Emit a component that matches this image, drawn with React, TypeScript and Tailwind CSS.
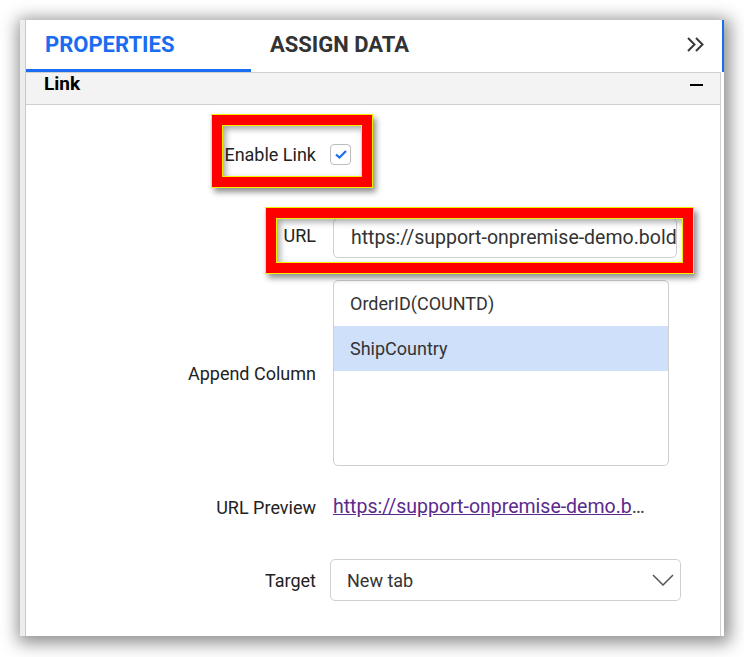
import React from "react";

function Frame({ className }: { className: string }) {
  return (
    <div className={`absolute border border-[#f0f000] shadow-[3px_4px_6px_rgba(0,0,0,0.45)] ${className}`}>
      <div className="w-full h-full border-[10px] border-[#ff0000]">
        <div className="w-full h-full border border-[#f0f000] shadow-[inset_3px_3px_6px_rgba(0,0,0,0.35)]" />
      </div>
    </div>
  );
}

export default function App() {
  return (
    <div className="w-[744px] h-[657px] bg-white pt-[20px] pl-[20px] font-[Roboto,sans-serif]">
      <div className="flex w-[704px] h-[616px] bg-white shadow-[2px_3px_16px_4px_rgba(0,0,0,0.45)]">
        <div className="w-[6px] bg-[#ededed] border-r border-[#c8c8c8]" />
        <div className="flex flex-col w-[696px]">
          <div className="flex h-[52px] items-stretch">
            <div className="w-[225px] border-b-[3px] border-[#1a6cf0] flex items-center pl-[19px] text-[22px] font-bold text-[#1a6cf0]">
              PROPERTIES
            </div>
            <div className="flex items-center pl-[19px] pb-[3px] text-[22px] font-bold text-[#333]">
              ASSIGN DATA
            </div>
            <div className="ml-auto flex items-center pr-[18px] pb-[3px]">
              <svg width="17" height="15" viewBox="0 0 17 15" fill="none" stroke="#3a3a3a" strokeWidth="2">
                <path d="M1 1 L7.5 7.5 L1 14" />
                <path d="M9 1 L15.5 7.5 L9 14" />
              </svg>
            </div>
          </div>
          <div className="flex-1 w-[695px] border-r border-[#d0d0d0] flex flex-col">
            <div className="h-[33px] bg-[#f3f3f3] border-t border-b border-[#d0d0d0] flex items-center justify-between pl-[18px] pr-[17px] pb-[8px]">
              <span className="text-[19px] font-bold text-black">Link</span>
              <span className="w-[13px] h-[2px] bg-black" />
            </div>
            <div className="relative flex-1 flex flex-col text-[18px] text-[#222]">
              <div className="flex items-center h-[21px] mt-[39px]">
                <div className="w-[290px] text-right">Enable Link</div>
                <div className="ml-[14px] w-[21px] h-[21px] rounded-[4px] border border-[#bdbdbd] bg-white flex items-center justify-center">
                  <svg width="12" height="9" viewBox="0 0 12 9" fill="none" stroke="#1a6cf0" strokeWidth="2.2">
                    <path d="M1 4.5 L4.5 7.5 L11 1" />
                  </svg>
                </div>
              </div>
              <div className="flex items-center h-[40px] mt-[53px]">
                <div className="w-[290px] text-right pb-[5px]">URL</div>
                <div className="ml-[17px] w-[344px] h-[40px] rounded-[5px] border border-[#cfcfcf] flex items-center pl-[17px] overflow-hidden whitespace-nowrap text-[19.5px] text-[#333]">
                  https://support-onpremise-demo.bold
                </div>
              </div>
              <div className="flex items-center h-[186px] mt-[22px]">
                <div className="w-[290px] text-right">Append Column</div>
                <div className="ml-[17px] w-[336px] h-[186px] rounded-[5px] border border-[#cfcfcf] flex flex-col overflow-hidden text-[#333]">
                  <div className="h-[45px] flex items-center pl-[16px]">OrderID(COUNTD)</div>
                  <div className="h-[45px] flex items-center pl-[16px] bg-[#cfe0fb]">ShipCountry</div>
                </div>
              </div>
              <div className="flex items-center h-[24px] mt-[29px]">
                <div className="w-[290px] text-right">URL Preview</div>
                <div className="ml-[17px] whitespace-nowrap text-[19.5px]">
                  <span className="underline text-[#5b2a8c]">https://support-onpremise-demo.b</span>
                  <span className="text-[#444]">…</span>
                </div>
              </div>
              <div className="flex items-center h-[42px] mt-[40px]">
                <div className="w-[290px] text-right">Target</div>
                <div className="ml-[14px] w-[351px] h-[42px] rounded-[5px] border border-[#cfcfcf] flex items-center justify-between pl-[16px] pr-[6px] text-[#333]">
                  <span>New tab</span>
                  <svg width="22" height="12" viewBox="0 0 22 12" fill="none" stroke="#555" strokeWidth="1.5">
                    <path d="M1 1 L11 11 L21 1" />
                  </svg>
                </div>
              </div>
              <Frame className="left-[185px] top-[9px] w-[162px] h-[74px]" />
              <Frame className="left-[239px] top-[102px] w-[429px] h-[67px]" />
            </div>
          </div>
        </div>
        <div className="w-[2px]">
          <div className="h-[52px] bg-[#1a6cf0]" />
        </div>
      </div>
    </div>
  );
}
